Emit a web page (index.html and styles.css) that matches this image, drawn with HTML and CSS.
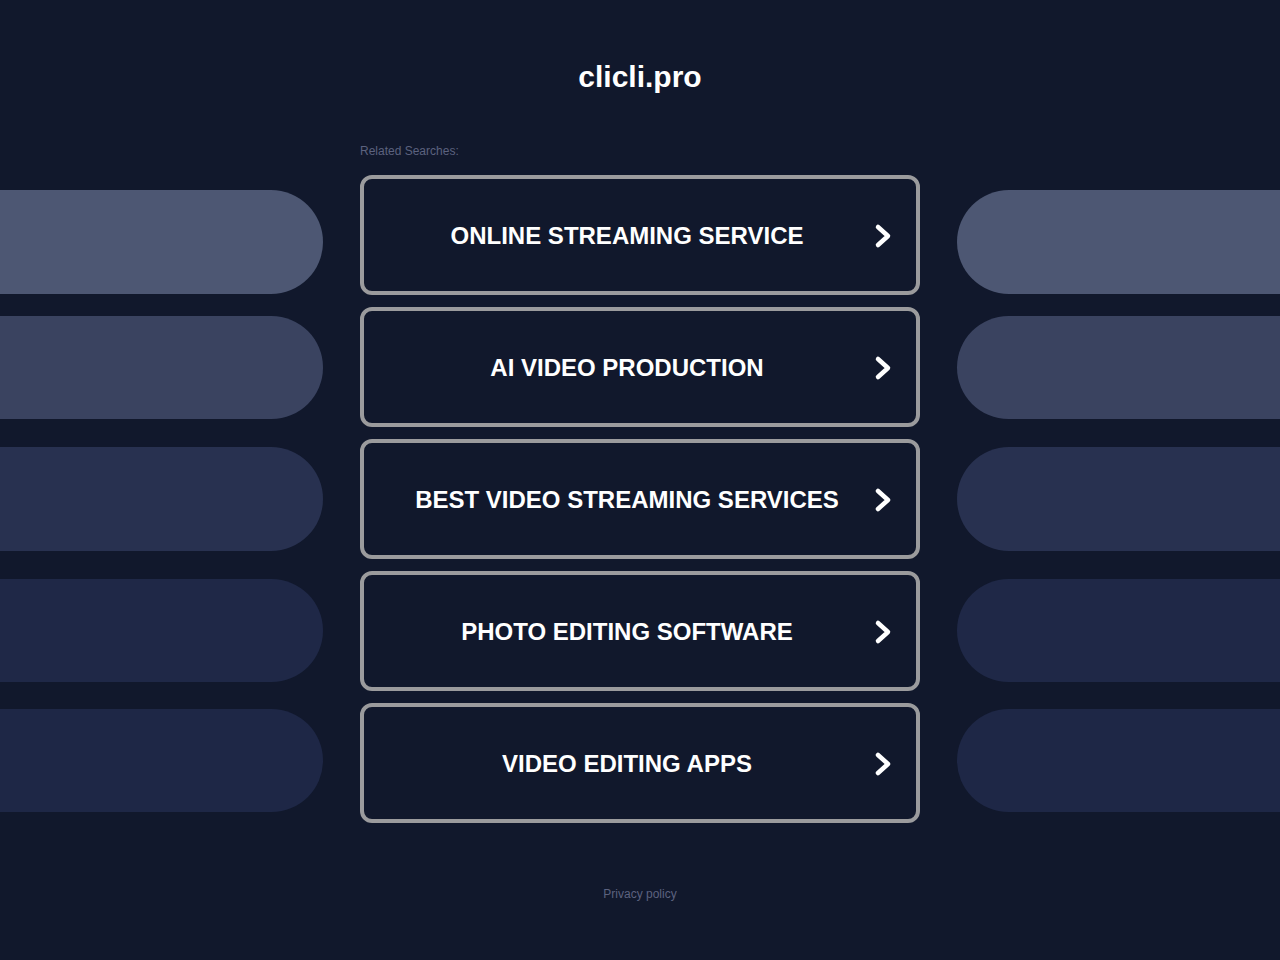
FILE: index.html
```html
<!DOCTYPE html>
<html lang="en">
<head>
<meta charset="utf-8">
<title>clicli.pro</title>
<link rel="stylesheet" href="styles.css">
</head>
<body>
<div class="page">
  <div class="side side-left">
    <div class="pill p1"></div>
    <div class="pill p2"></div>
    <div class="pill p3"></div>
    <div class="pill p4"></div>
    <div class="pill p5"></div>
  </div>
  <main class="center">
    <h1 class="title">clicli.pro</h1>
    <div class="label">Related Searches:</div>
    <div class="links">
      <a class="link" href="#"><span class="link-text">ONLINE STREAMING SERVICE</span><svg class="chev" width="20" height="26" viewBox="0 0 20 26"><polyline points="5,4 15,13 5,22" fill="none" stroke="#fff" stroke-width="4.5" stroke-linecap="round" stroke-linejoin="round"/></svg></a>
      <a class="link" href="#"><span class="link-text">AI VIDEO PRODUCTION</span><svg class="chev" width="20" height="26" viewBox="0 0 20 26"><polyline points="5,4 15,13 5,22" fill="none" stroke="#fff" stroke-width="4.5" stroke-linecap="round" stroke-linejoin="round"/></svg></a>
      <a class="link" href="#"><span class="link-text">BEST VIDEO STREAMING SERVICES</span><svg class="chev" width="20" height="26" viewBox="0 0 20 26"><polyline points="5,4 15,13 5,22" fill="none" stroke="#fff" stroke-width="4.5" stroke-linecap="round" stroke-linejoin="round"/></svg></a>
      <a class="link" href="#"><span class="link-text">PHOTO EDITING SOFTWARE</span><svg class="chev" width="20" height="26" viewBox="0 0 20 26"><polyline points="5,4 15,13 5,22" fill="none" stroke="#fff" stroke-width="4.5" stroke-linecap="round" stroke-linejoin="round"/></svg></a>
      <a class="link" href="#"><span class="link-text">VIDEO EDITING APPS</span><svg class="chev" width="20" height="26" viewBox="0 0 20 26"><polyline points="5,4 15,13 5,22" fill="none" stroke="#fff" stroke-width="4.5" stroke-linecap="round" stroke-linejoin="round"/></svg></a>
    </div>
    <a class="privacy" href="#">Privacy policy</a>
  </main>
  <div class="side side-right">
    <div class="pill p1"></div>
    <div class="pill p2"></div>
    <div class="pill p3"></div>
    <div class="pill p4"></div>
    <div class="pill p5"></div>
  </div>
</div>
</body>
</html>
```

FILE: styles.css
```css
html, body {
  margin: 0;
  padding: 0;
  background: #11182c;
  font-family: "Liberation Sans", Arial, sans-serif;
}

.page {
  display: grid;
  grid-template-columns: 323px 560px 323px;
  column-gap: 37px;
  min-height: 960px;
}

.side {
  display: flex;
  flex-direction: column;
  padding-top: 190px;
}

.pill {
  height: 104px;
}

.pill.p2 { margin-top: 22px; height: 103px; }
.pill.p3 { margin-top: 28px; }
.pill.p4 { margin-top: 28px; height: 103px; }
.pill.p5 { margin-top: 27px; height: 103px; }

.p1 { background: #4d5773; }
.p2 { background: #3a4360; }
.p3 { background: #283150; }
.p4 { background: #1f2847; }
.p5 { background: #1e2746; }

.side-left .pill {
  border-radius: 0 52px 52px 0;
}

.side-right .pill {
  border-radius: 52px 0 0 52px;
}

.center {
  display: flex;
  flex-direction: column;
  padding-top: 59px;
}

.title {
  margin: 0;
  font-size: 30px;
  line-height: 36px;
  font-weight: bold;
  color: #ffffff;
  text-align: center;
}

.label {
  margin-top: 49px;
  font-size: 12px;
  line-height: 14px;
  color: #5c627f;
}

.links {
  margin-top: 17px;
  display: flex;
  flex-direction: column;
  gap: 12px;
}

.link {
  box-sizing: border-box;
  height: 120px;
  border: 4px solid #9b9b9d;
  border-radius: 12px;
  display: flex;
  align-items: center;
  padding: 1px 23px 0 17px;
  text-decoration: none;
  color: #ffffff;
}

.link-text {
  flex: 1;
  text-align: center;
  font-size: 24px;
  font-weight: bold;
  line-height: 28px;
}

.chev {
  display: block;
  flex: none;
}

.privacy {
  margin-top: 64px;
  align-self: center;
  font-size: 12px;
  line-height: 14px;
  color: #5c627f;
  text-decoration: none;
}
```
